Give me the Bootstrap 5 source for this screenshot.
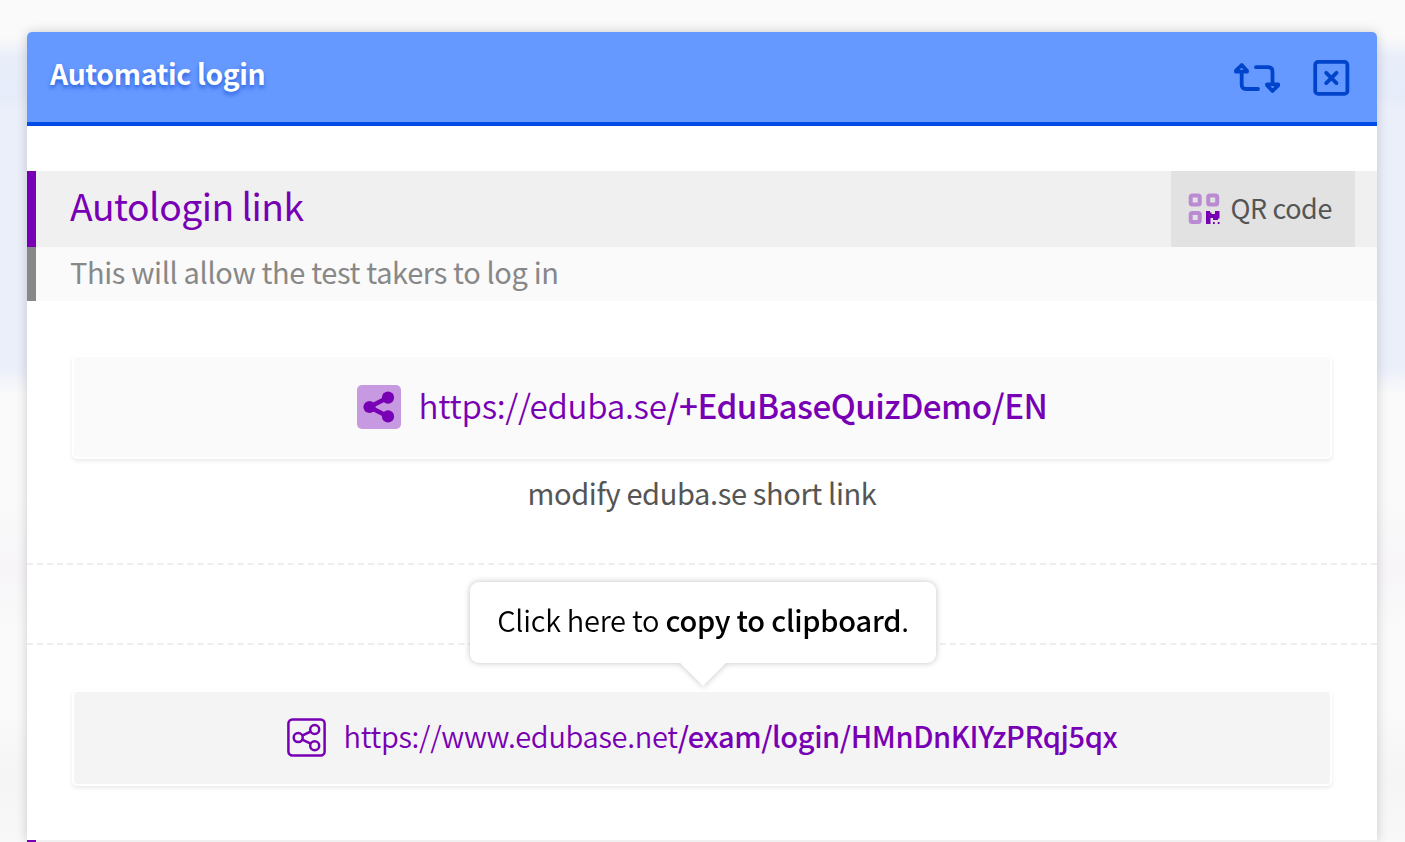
<!DOCTYPE html>
<html lang="en">
<head>
  <meta charset="UTF-8" />
  <title>Automatic login</title>
  <meta name="viewport" content="width=device-width, initial-scale=1" />
  <link href="https://cdn.jsdelivr.net/npm/bootstrap@5.3.3/dist/css/bootstrap.min.css" rel="stylesheet" />

  <style>
    :root {
      --purple: #7800b4;
      --blue: #6699ff;
      --blue-dark: #0044cc;
    }

    body {
      height: 842px;
      padding: 32px 0 0 27px;
      overflow: hidden;
      font-family: "Noto Sans CJK SC", "Noto Sans", sans-serif;
      font-size: 29px;
      letter-spacing: -0.36px;
      line-height: 40px;
      color: #555;
      background: linear-gradient(to bottom, #fafafa 0, #fafafa 36px, #e8edf9 58px, #e6ecf9 95px, #ebeffa 112px, #ebeffa 368px, #fafafa 394px, #fafafa 500px, #f7f5f8 570px, #fafafa 630px, #fafafa 710px, #f5f5f5 775px, #f8f8f8 842px);
    }

    .panel {
      width: 1350px;
      height: 810px;
      border-radius: 5px 5px 0 0;
      box-shadow: 0 0 12px rgba(0, 0, 0, 0.18);
    }

    .panel-top {
      height: 94px;
      padding: 0 27px 0 22px;
      background-color: var(--blue);
      border-bottom: 4px solid #004ce6;
      border-radius: 5px 5px 0 0;
    }

    .panel-top svg {
      stroke: var(--blue-dark);
    }

    .panel-title {
      margin: 0;
      padding: 0 0 9px 1px;
      font-size: 28.3px;
      font-weight: 700;
      line-height: 40px;
      text-shadow: 0 3px 4px rgba(0, 60, 200, 0.6);
    }

    .section-head {
      height: 76px;
      margin-top: 45px;
      padding: 0 22px 0 34px;
      background-color: #f0f0f0;
      border-left: 9px solid var(--purple);
    }

    .section-head h2 {
      margin: 0;
      padding-bottom: 8px;
      font-size: 37.3px;
      font-weight: 400;
      letter-spacing: -0.52px;
      color: var(--purple);
    }

    .section-note {
      height: 54px;
      padding: 0 0 7px 34px;
      color: #888;
      background-color: #fafafa;
      border-left: 9px solid #888;
    }

    .qr-btn {
      width: 184px;
      padding-left: 17px;
      font-size: 26.9px;
      background-color: #e2e2e2;
    }

    .qr-btn span {
      margin-left: 10.5px;
      padding-bottom: 3px;
    }

    .link-box {
      margin: 0 45px;
      color: var(--purple);
      background-color: #fafafa;
      border: 2px solid #fff;
      border-radius: 5px;
      box-shadow: 0 2px 4px rgba(0, 0, 0, 0.09);
    }

    .link-box strong,
    .tip strong {
      font-weight: 500;
    }

    .link-text {
      margin-left: 18px;
      padding-bottom: 4px;
      font-weight: 350;
      letter-spacing: -0.3px;
    }

    .link-text strong {
      letter-spacing: -0.4px;
    }

    .link-short {
      height: 104px;
      margin-top: 54px;
      font-size: 33.2px;
    }

    .link-short .link-text strong {
      letter-spacing: -0.52px;
    }

    .link-long {
      height: 96px;
      margin-top: 45px;
      padding-bottom: 1px;
      background-color: #f4f4f4;
    }

    .link-long .link-text {
      padding-bottom: 6px;
    }

    .modify {
      height: 104px;
      padding-top: 13px;
    }

    .divider {
      height: 82px;
      border-top: 2px dashed #eee;
      border-bottom: 2px dashed #eee;
    }

    .tip {
      left: 443px;
      top: 550px;
      width: 466px;
      height: 81px;
      padding-bottom: 7px;
      font-weight: 350;
      letter-spacing: -0.26px;
      color: #000;
      border-radius: 9px;
      filter: drop-shadow(0 0 3px rgba(0, 0, 0, 0.24));
    }

    .tip::after {
      content: "";
      position: absolute;
      left: 210px;
      top: 100%;
      border: 23px solid transparent;
      border-top-color: #fff;
      border-bottom: 0;
    }

    .next-head {
      height: 2px;
      margin-top: 54px;
      background-color: #f0f0f0;
      border-left: 9px solid var(--purple);
    }
  </style>
</head>
<body>
  <div class="panel bg-white position-relative">
    <!-- Header -->
    <div class="panel-top d-flex align-items-center justify-content-between">
      <h1 class="panel-title text-white">Automatic login</h1>
      <div class="d-flex align-items-center pt-1">
        <svg width="50" height="40" viewBox="1232 58.5 50 40" fill="none" stroke-width="3.8" stroke-linecap="round" stroke-linejoin="round">
          <path d="M1241.7 64.5L1236 70.2V71.2H1247V70.2ZM1241.7 72V84Q1241.7 88.5 1246.2 88.5H1258M1256 66.7H1268Q1272.5 66.7 1272.5 71.2V83M1272.5 90.5L1278.2 84.8V83.8H1267V84.8Z" />
        </svg>
        <svg class="ms-4" width="44" height="40" viewBox="1306 58.9 44 40" fill="none" stroke-width="3.8" stroke-linecap="round">
          <rect x="1315.2" y="61.8" width="32.2" height="32" rx="3" />
          <path d="M1326.2 72.7L1336.5 83M1336.5 72.7L1326.2 83" />
        </svg>
      </div>
    </div>

    <!-- Autologin link -->
    <div class="section-head d-flex align-items-center justify-content-between">
      <h2>Autologin link</h2>
      <div class="qr-btn h-100 d-flex align-items-center">
        <svg width="32" height="32" viewBox="0 0 32 32">
          <g fill="none" stroke="#ba8bd3" stroke-width="4">
            <rect x="2.7" y="2.4" width="9" height="9" rx="1.5" />
            <rect x="20.2" y="2.4" width="9" height="9" rx="1.5" />
            <rect x="2.7" y="20" width="9" height="9" rx="1.5" />
          </g>
          <path fill="#7800b4" d="M18 18H22V19.5H23.5V21H27V18H31.5V25.5H30V27H25V25H22.5V31H18ZM25 29H26.8V31H25ZM29.7 29H31.5V31H29.7Z" />
        </svg>
        <span>QR code</span>
      </div>
    </div>
    <div class="section-note d-flex align-items-center">This will allow the test takers to log in</div>

    <div class="link-box link-short d-flex align-items-center justify-content-center">
      <svg width="44" height="44" viewBox="0 0 44 44">
        <rect width="44" height="44" rx="5" fill="#c799e1" />
        <path d="M31 12.5L12.5 22L31 31.5" fill="none" stroke="#7800b4" stroke-width="4.6" />
        <g fill="#7800b4"><circle cx="31" cy="12.6" r="6.1" /><circle cx="12.5" cy="22" r="6.1" /><circle cx="31" cy="31.4" r="6.1" /></g>
      </svg>
      <span class="link-text">https://eduba.se<strong>/+EduBaseQuizDemo/EN</strong></span>
    </div>
    <div class="modify text-center">modify eduba.se short link</div>

    <div class="divider"></div>

    <div class="link-box link-long d-flex align-items-center justify-content-center">
      <svg width="39" height="39" viewBox="0 0 39 39" fill="none" stroke="#7800b4" stroke-width="2.5">
        <rect x="1.4" y="1.4" width="36.2" height="36.2" rx="4" />
        <circle cx="27.7" cy="11.5" r="4.5" />
        <circle cx="11.2" cy="19.6" r="4.5" />
        <circle cx="27.7" cy="27.7" r="4.5" />
        <path d="M15.2 17.6L23.7 13.5M15.2 21.6L23.7 25.7" />
      </svg>
      <span class="link-text">https://www.edubase.net<strong>/exam/login/HMnDnKIYzPRqj5qx</strong></span>
    </div>

    <div class="next-head"></div>

    <!-- Copy hint -->
    <div class="tip position-absolute bg-white d-flex align-items-center justify-content-center">
      <div>Click here to <strong>copy to clipboard</strong>.</div>
    </div>
  </div>

  <script src="https://cdn.jsdelivr.net/npm/bootstrap@5.3.3/dist/js/bootstrap.bundle.min.js"></script>
</body>
</html>
